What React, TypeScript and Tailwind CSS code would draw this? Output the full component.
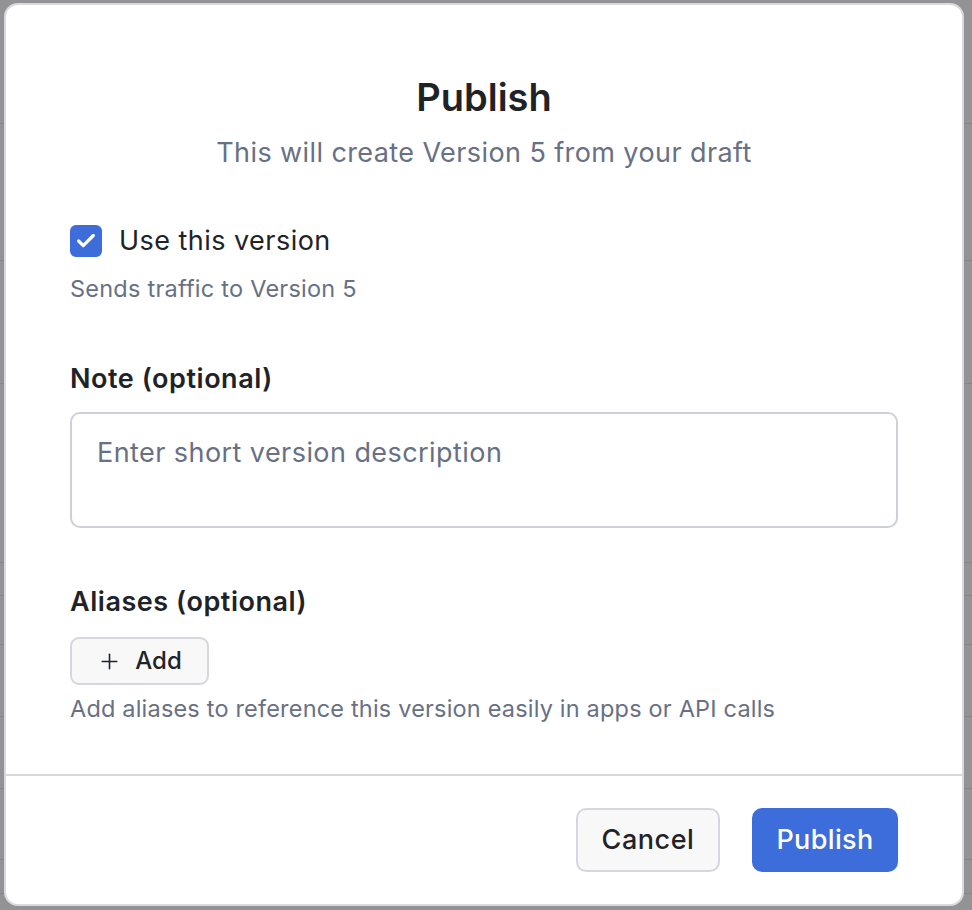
import { Check, Plus } from "lucide-react";

// rows of the page underneath the dim overlay
const backdropRows = [124, 137, 123, 179, 33, 49, 72, 72, 71, 34];

function Backdrop() {
  return (
    <div className="flex flex-col">
      {backdropRows.map((h, i) => (
        <div key={i} className="border-b border-[#858488]" style={{ height: h }} />
      ))}
    </div>
  );
}

export default function App() {
  return (
    <div className="relative h-[910px] w-full overflow-hidden bg-[#939295] font-['Inter','Noto_Sans',sans-serif]">
      <Backdrop />

      <div className="absolute left-[4px] top-[3px] flex h-[903px] w-[960px] flex-col rounded-[14px] border-2 border-[#d9dae0] bg-white">
        <div className="flex-1 px-[64px] pt-[69px]">
          <div className="text-center">
            <h1 className="text-[38px] font-semibold leading-[46px] text-[#1f2328]">Publish</h1>
            <p className="mt-[17px] text-[27px] leading-[32px] tracking-[0.015em] text-[#687084]">
              This will create Version 5 from your draft
            </p>
          </div>

          <label className="mt-[55px] flex items-center gap-[17px]">
            <span className="flex h-[32px] w-[32px] items-center justify-center rounded-[6px] bg-[#3d6cdb]">
              <Check className="h-[22px] w-[22px] text-white" strokeWidth={3.5} />
            </span>
            <span className="text-[27px] leading-[34px] tracking-[0.017em] text-[#1f2328]">Use this version</span>
          </label>
          <p className="mt-[16px] text-[23.5px] leading-[30px] tracking-[0.01em] text-[#687084]">
            Sends traffic to Version 5
          </p>

          <h2 className="mt-[58px] text-[27px] font-semibold leading-[34px] tracking-[0.02em] text-[#1f2328]">
            Note (optional)
          </h2>
          <div className="mt-[16px] h-[116px] rounded-[10px] border-2 border-[#cdd0d5] px-[25px] pt-[22px]">
            <span className="text-[27px] leading-[34px] tracking-[0.016em] text-[#687084]">
              Enter short version description
            </span>
          </div>

          <h2 className="mt-[57px] text-[27px] font-semibold leading-[34px] tracking-[0.02em] text-[#1f2328]">
            Aliases (optional)
          </h2>
          <button className="mt-[18px] flex h-[48px] w-[139px] items-center justify-center gap-[13px] rounded-[9px] border-2 border-[#d6d7dc] bg-[#f8f8f9]">
            <Plus className="h-[25px] w-[25px] text-[#1f2328]" strokeWidth={1.5} />
            <span className="text-[24px] font-medium text-[#1f2328]">Add</span>
          </button>
          <p className="mt-[9px] text-[23.5px] leading-[30px] tracking-[0.008em] text-[#687084]">
            Add aliases to reference this version easily in apps or API calls
          </p>
        </div>

        <div className="flex h-[130px] items-center justify-end gap-[32px] border-t-2 border-[#d7d7dc] px-[64px]">
          <button className="h-[64px] w-[144px] rounded-[10px] border-2 border-[#d6d7dc] bg-[#f8f8f9] text-[27px] font-medium tracking-[0.02em] text-[#1f2328]">
            Cancel
          </button>
          <button className="h-[64px] w-[146px] rounded-[10px] bg-[#3d6cdb] text-[27px] font-medium tracking-[0.013em] text-white">
            Publish
          </button>
        </div>
      </div>
    </div>
  );
}
